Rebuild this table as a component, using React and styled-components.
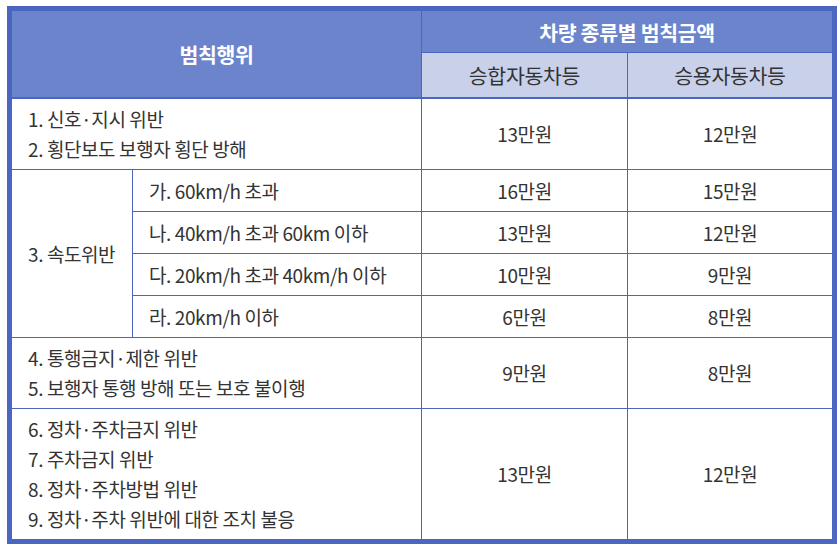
import React from "react";
import styled, { createGlobalStyle } from "styled-components";

const Global = createGlobalStyle`
  html, body { margin: 0; padding: 0; background: #ffffff; }
  body { font-family: "Noto Sans CJK KR", "Noto Sans", sans-serif; }
`;

const LINE = "#4a66c0";

const Page = styled.div`
  padding: 6px 0 0 7px;
`;

const Table = styled.div`
  box-sizing: border-box;
  width: 830px;
  height: 538px;
  border: 5px solid ${LINE};
  display: grid;
  grid-template-columns: 121px 289px 206px 204px;
  grid-template-rows: 42px 46px 71px 42px 42px 42px 42px 71px 130px;
  font-family: "Noto Sans CJK KR", "Noto Sans", sans-serif;
  color: #333333;
`;

const Cell = styled.div`
  box-sizing: border-box;
  display: flex;
  flex-direction: column;
  justify-content: center;
  align-items: ${(p) => (p.$align === "left" ? "flex-start" : "center")};
  padding-left: ${(p) => (p.$align === "left" ? "16px" : "0")};
  grid-column: ${(p) => p.$col};
  grid-row: ${(p) => p.$row};
  border-right: ${(p) => (p.$last ? "none" : `1px solid ${LINE}`)};
  border-bottom: ${(p) => (p.$bottom === 0 ? "none" : `${p.$bottom || 1}px solid ${LINE}`)};
  font-size: 19px;
  line-height: 30px;
  letter-spacing: -0.4px;
  white-space: nowrap;
`;

const HeadCell = styled(Cell)`
  background: #6c84cb;
  color: #ffffff;
  font-weight: 700;
  font-size: 20.5px;
  letter-spacing: -0.3px;
`;

const SubHeadCell = styled(Cell)`
  background: #c9d1ea;
  color: #333333;
  font-size: 20.5px;
  letter-spacing: -0.3px;
`;

const Line = styled.span`
  display: block;
`;

const speed = [
  { label: "가. 60km/h 초과", a: "16만원", b: "15만원" },
  { label: "나. 40km/h 초과 60km 이하", a: "13만원", b: "12만원" },
  { label: "다. 20km/h 초과 40km/h 이하", a: "10만원", b: "9만원" },
  { label: "라. 20km/h 이하", a: "6만원", b: "8만원" },
];

const groups = [
  {
    row: "3",
    lines: ["1. 신호·지시 위반", "2. 횡단보도 보행자 횡단 방해"],
    a: "13만원",
    b: "12만원",
  },
  {
    row: "8",
    lines: ["4. 통행금지·제한 위반", "5. 보행자 통행 방해 또는 보호 불이행"],
    a: "9만원",
    b: "8만원",
  },
  {
    row: "9",
    lines: [
      "6. 정차·주차금지 위반",
      "7. 주차금지 위반",
      "8. 정차·주차방법 위반",
      "9. 정차·주차 위반에 대한 조치 불응",
    ],
    a: "13만원",
    b: "12만원",
    final: true,
  },
];

export default function App() {
  return (
    <Page>
      <Global />
      <Table>
        <HeadCell $col="1 / 3" $row="1 / 3" $bottom={2}>범칙행위</HeadCell>
        <HeadCell $col="3 / 5" $row="1" $last>차량 종류별 범칙금액</HeadCell>
        <SubHeadCell $col="3" $row="2" $bottom={2}>승합자동차등</SubHeadCell>
        <SubHeadCell $col="4" $row="2" $bottom={2} $last>승용자동차등</SubHeadCell>

        {groups.map((g) => (
          <React.Fragment key={g.row}>
            <Cell $col="1 / 3" $row={g.row} $align="left" $bottom={g.final ? 0 : 1}>
              {g.lines.map((l) => (
                <Line key={l}>{l}</Line>
              ))}
            </Cell>
            <Cell $col="3" $row={g.row} $bottom={g.final ? 0 : 1}>{g.a}</Cell>
            <Cell $col="4" $row={g.row} $bottom={g.final ? 0 : 1} $last>{g.b}</Cell>
          </React.Fragment>
        ))}

        <Cell $col="1" $row="4 / 8" $align="left">3. 속도위반</Cell>
        {speed.map((s, i) => (
          <React.Fragment key={s.label}>
            <Cell $col="2" $row={`${4 + i}`} $align="left">{s.label}</Cell>
            <Cell $col="3" $row={`${4 + i}`}>{s.a}</Cell>
            <Cell $col="4" $row={`${4 + i}`} $last>{s.b}</Cell>
          </React.Fragment>
        ))}
      </Table>
    </Page>
  );
}
